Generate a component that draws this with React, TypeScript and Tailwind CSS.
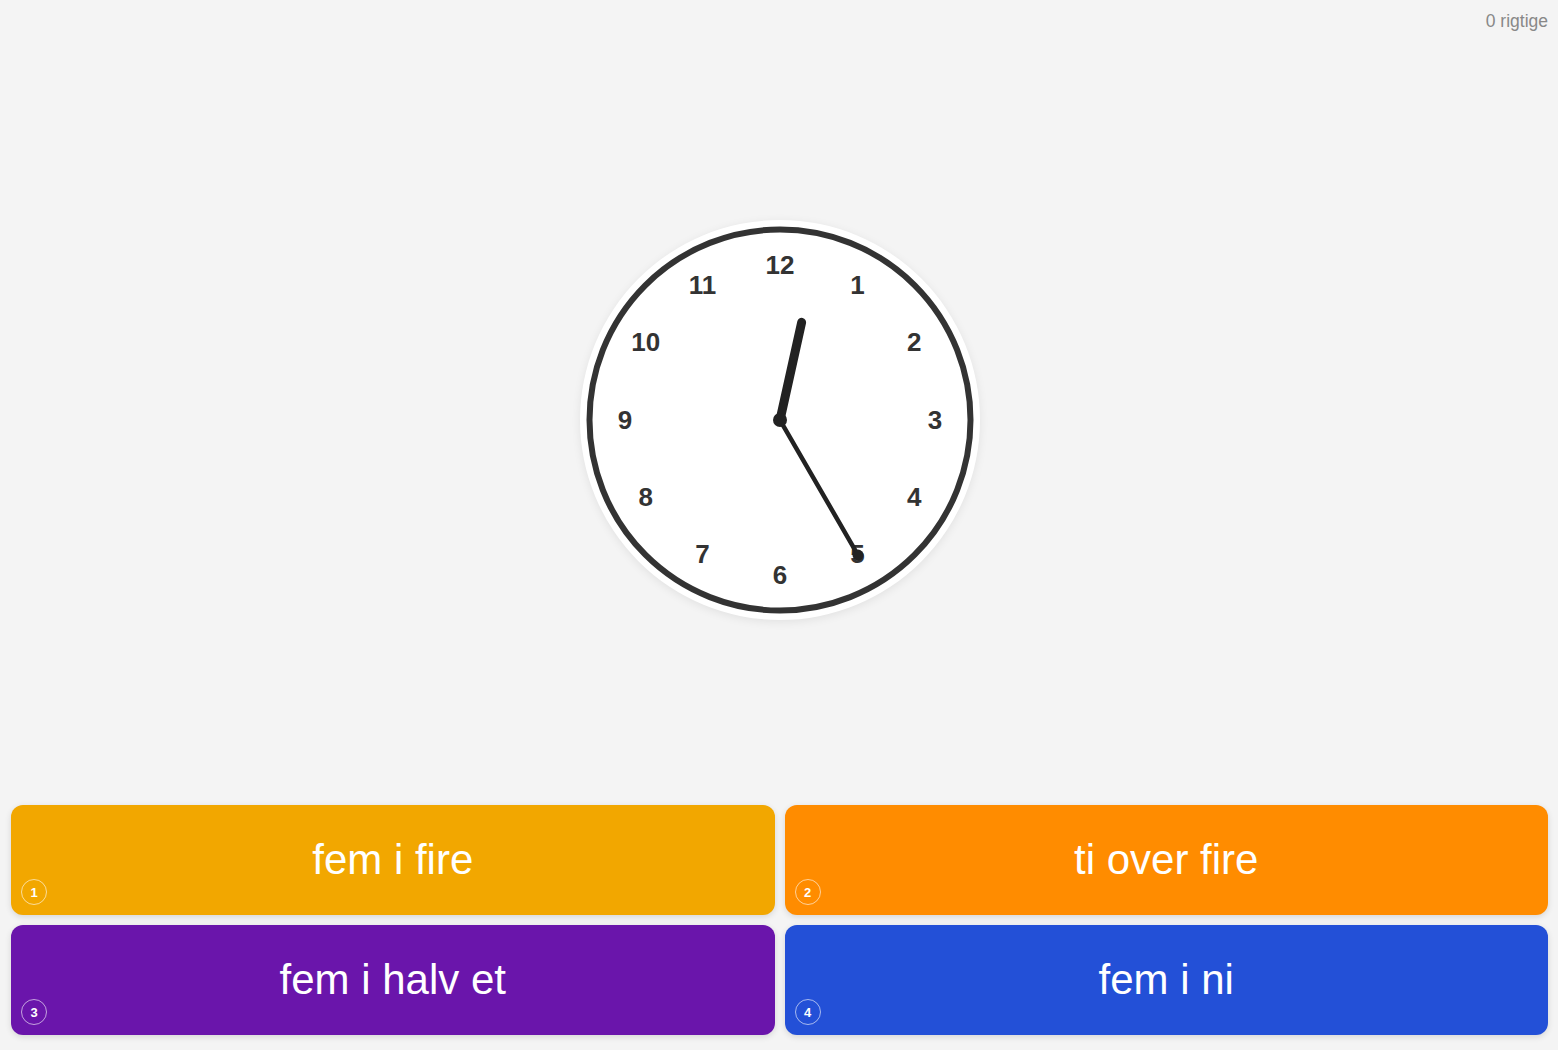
import React from "react";

const numbers = [12, 1, 2, 3, 4, 5, 6, 7, 8, 9, 10, 11];

function Clock() {
  const cx = 200;
  const cy = 200;
  const hourAngle = (12.5 * Math.PI) / 180;
  const minAngle = (150 * Math.PI) / 180;
  const hx = cx + 100 * Math.sin(hourAngle);
  const hy = cy - 100 * Math.cos(hourAngle);
  const mx = cx + 156 * Math.sin(minAngle);
  const my = cy - 156 * Math.cos(minAngle);
  return (
    <div className="w-[400px] h-[400px] rounded-full bg-white shadow-[0_2px_10px_rgba(0,0,0,0.08)]">
      <svg width="400" height="400" viewBox="0 0 400 400">
        <circle cx={cx} cy={cy} r={190.5} fill="white" stroke="#333" strokeWidth={6} />
        {numbers.map((n, i) => {
          const a = (i * 30 * Math.PI) / 180;
          const x = cx + 155 * Math.sin(a);
          const y = cy - 155 * Math.cos(a) - 0.5;
          return (
            <text
              key={n}
              x={x}
              y={y}
              textAnchor="middle"
              dominantBaseline="central"
              fill="#333"
              fontSize={26}
              fontWeight={700}
              fontFamily="'Liberation Sans', Arial, sans-serif"
            >
              {n}
            </text>
          );
        })}
        <line x1={cx} y1={cy} x2={hx} y2={hy} stroke="#222" strokeWidth={9} strokeLinecap="round" />
        <line x1={cx} y1={cy} x2={mx} y2={my} stroke="#222" strokeWidth={4.5} strokeLinecap="round" />
        <circle cx={mx} cy={my} r={5.5} fill="#222" />
        <circle cx={cx} cy={cy} r={7} fill="#222" />
      </svg>
    </div>
  );
}

function Answer({ text, n, color }: { text: string; n: number; color: string }) {
  return (
    <button
      className={`relative h-[110px] rounded-[12px] ${color} text-white text-[42px] flex items-center justify-center shadow-[0_2px_6px_rgba(0,0,0,0.12)]`}
    >
      <span className="leading-none">{text}</span>
      <span className="absolute left-[10px] bottom-[10px] w-[26px] h-[26px] rounded-full border border-white/60 flex items-center justify-center text-[13px] font-bold leading-none">
        {n}
      </span>
    </button>
  );
}

export default function App() {
  return (
    <div className="w-full h-screen bg-[#f4f4f4] flex flex-col font-['Liberation_Sans',Arial,sans-serif] overflow-hidden">
      <div className="h-[45px] flex justify-end items-start pr-[10px] pt-[9px]">
        <span className="text-[17.5px] text-[#888] leading-[24px]">0 rigtige</span>
      </div>
      <div className="flex-1 flex items-center justify-center pl-[2px]">
        <Clock />
      </div>
      <div className="grid grid-cols-2 gap-[10px] pl-[11px] pr-[10px] pt-[10px] pb-[15px]">
        <Answer text="fem i fire" n={1} color="bg-[#f2a700]" />
        <Answer text="ti over fire" n={2} color="bg-[#ff8c00]" />
        <Answer text="fem i halv et" n={3} color="bg-[#6a15ab]" />
        <Answer text="fem i ni" n={4} color="bg-[#2350d7]" />
      </div>
    </div>
  );
}
